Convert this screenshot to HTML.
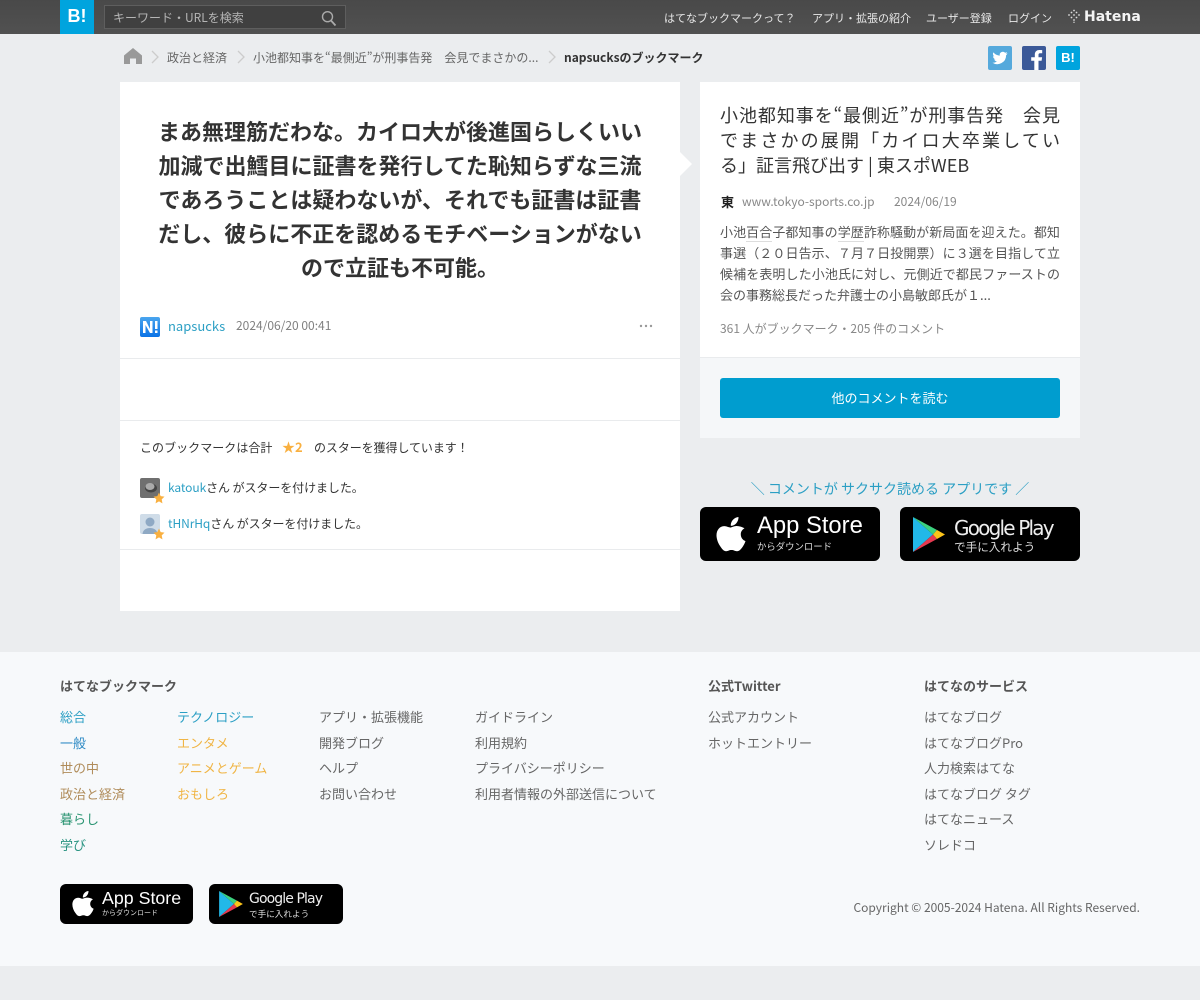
<!DOCTYPE html>
<html lang="ja"><head><meta charset="utf-8"><title>napsucksのブックマーク</title>
<style>
html,body{margin:0;padding:0}
body{width:1200px;height:1000px;overflow:hidden;position:relative;background:#ebedef;font-family:"Noto Sans CJK JP","Liberation Sans",sans-serif;color:#333}
.a{position:absolute;white-space:nowrap}
.t{position:absolute;white-space:nowrap;line-height:20px;font-size:13px}
.box{position:absolute;background:#fff}
.hr{position:absolute;height:1px;background:#e9ebed}
.badge{position:absolute;background:#000;border-radius:6px;overflow:hidden}
.j{display:block;text-align:justify;text-align-last:justify;white-space:normal}
</style></head><body>

<!-- header -->
<div class="a" style="left:0;top:0;width:1200px;height:34px;background:linear-gradient(#494949,#515151)"></div>
<div class="a" style="left:60px;top:0;width:34px;height:34px;background:#00a4de"></div>
<div class="a" style="left:60px;top:0;width:34px;height:34px;text-align:center;color:#fff;font:bold 18px/33px 'Liberation Sans',sans-serif">B!</div>
<div class="a" style="left:104px;top:5px;width:240px;height:22px;background:#404040;border:1px solid #5e5e5e"></div>
<div class="t" style="left:113px;top:8px;font-size:12px;color:#b5b5b5">キーワード・URLを検索</div>
<svg class="a" style="left:320px;top:10px" width="18" height="17" viewBox="0 0 18 17"><circle cx="7.500" cy="6.700" r="5" fill="none" stroke="#aaa" stroke-width="1.400"/><path d="M11 10.500L15.500 15.500" stroke="#aaa" stroke-width="1.800"/></svg>
<div class="t" style="left:664px;top:8px;font-size:11px;color:#e8e8e8">はてなブックマークって？</div>
<div class="t" style="left:812px;top:8px;font-size:11px;color:#e8e8e8">アプリ・拡張の紹介</div>
<div class="t" style="left:926px;top:8px;font-size:11px;color:#e8e8e8">ユーザー登録</div>
<div class="t" style="left:1008px;top:8px;font-size:11px;color:#e8e8e8">ログイン</div>
<svg class="a" style="left:1067px;top:9px" width="14" height="14" viewBox="0 0 14 14" fill="#ddd"><circle cx="7" cy="1.500" r=".9"/><circle cx="4.500" cy="3.500" r=".9"/><circle cx="9.500" cy="3.500" r=".9"/><circle cx="2" cy="6" r=".9"/><circle cx="7" cy="6" r=".9"/><circle cx="12" cy="6" r=".9"/><circle cx="4.500" cy="8.500" r=".9"/><circle cx="9.500" cy="8.500" r=".9"/><circle cx="7" cy="11" r=".9"/><circle cx="7" cy="13.300" r=".7"/></svg>
<div class="a" style="left:1084px;top:7px;font:bold 14px/20px 'DejaVu Sans',sans-serif;color:#f4f4f4">Hatena</div>

<!-- breadcrumb -->
<svg class="a" style="left:124px;top:48px" width="18" height="16" viewBox="0 0 18 16"><path d="M9 0L18 7.500V16H12V10.500H6V16H0V7.500Z" fill="#999"/></svg>
<svg class="a" style="left:150px;top:50px" width="10" height="14" viewBox="0 0 10 14"><path d="M2 1L8 7L2 13" fill="none" stroke="#ccc" stroke-width="1.300"/></svg>
<div class="t" style="left:167px;top:48px;font-size:12px;color:#666">政治と経済</div>
<svg class="a" style="left:236px;top:50px" width="10" height="14" viewBox="0 0 10 14"><path d="M2 1L8 7L2 13" fill="none" stroke="#ccc" stroke-width="1.300"/></svg>
<div class="t" style="left:253px;top:48px;font-size:12px;color:#666">小池都知事を“最側近”が刑事告発　会見でまさかの...</div>
<svg class="a" style="left:547px;top:50px" width="10" height="14" viewBox="0 0 10 14"><path d="M2 1L8 7L2 13" fill="none" stroke="#ccc" stroke-width="1.300"/></svg>
<div class="t" style="left:564px;top:48px;font-size:12px;font-weight:bold;color:#333">napsucksのブックマーク</div>

<svg class="a" style="left:988px;top:46px" width="24" height="24" viewBox="0 0 24 24"><rect width="24" height="24" rx="2" fill="#55a9dc"/><path d="M19.500 7.200c-.6.300-1.200.4-1.800.5.700-.4 1.100-1 1.400-1.700-.6.400-1.300.6-2 .8a3.100 3.100 0 0 0-5.300 2.800C9.200 9.500 6.900 8.300 5.400 6.400c-.8 1.400-.4 3.200 1 4.100-.5 0-1-.2-1.400-.4 0 1.500 1.100 2.800 2.500 3.100-.5.100-.9.200-1.400.1.400 1.200 1.500 2.100 2.900 2.100A6.300 6.300 0 0 1 4.500 16.700 8.800 8.800 0 0 0 18.100 9.200c.6-.5 1-1.200 1.400-2Z" fill="#fff"/></svg>
<svg class="a" style="left:1022px;top:46px" width="24" height="24" viewBox="0 0 24 24"><rect width="24" height="24" rx="2" fill="#3b5998"/><path d="M16.500 24v-9.200h3.100l.5-3.600h-3.600V9c0-1 .3-1.700 1.800-1.700h1.900V4.100c-.3 0-1.500-.1-2.800-.1-2.800 0-4.600 1.700-4.600 4.700v2.500H9.200v3.600h3.100V24Z" fill="#fff"/></svg>
<div class="a" style="left:1056px;top:46px;width:24px;height:24px;border-radius:2px;background:#00a4de;color:#fff;text-align:center;font:bold 13px/24px 'Liberation Sans',sans-serif">B!</div>

<!-- left card -->
<div class="box" style="left:120px;top:82px;width:560px;height:529px"></div>
<div class="a" style="left:120px;top:114px;width:560px;text-align:center;font-size:22px;font-weight:bold;line-height:34px;color:#333">まあ無理筋だわな。カイロ大が後進国らしくいい<br>加減で出鱈目に証書を発行してた恥知らずな三流<br>であろうことは疑わないが、それでも証書は証書<br>だし、彼らに不正を認めるモチベーションがない<br>ので立証も不可能。</div>
<svg class="a" style="left:140px;top:317px" width="20" height="20" viewBox="0 0 20 20"><defs><linearGradient id="g1" x1="0" y1="0" x2="0" y2="1"><stop offset="0" stop-color="#4aa5ee"/><stop offset="1" stop-color="#0a72e6"/></linearGradient></defs><rect width="20" height="20" rx="2" fill="url(#g1)"/><path d="M3 4h3l4 8V4h2.500v12H10L5.500 8v8H3ZM15 4h2.500v8H15ZM15 13.500h2.500V16H15Z" fill="#fff"/></svg>
<div class="t" style="left:168px;top:316px;font-size:13px;color:#2b9fc4">napsucks</div>
<div class="t" style="left:236px;top:316px;font-size:12px;color:#808080">2024/06/20 00:41</div>
<svg class="a" style="left:639px;top:323px" width="14" height="6" viewBox="0 0 14 6" fill="#999"><circle cx="2" cy="3" r="1.200"/><circle cx="7" cy="3" r="1.200"/><circle cx="12" cy="3" r="1.200"/></svg>
<div class="hr" style="left:120px;top:358px;width:560px"></div>
<div class="hr" style="left:120px;top:420px;width:560px"></div>
<div class="t" style="left:140px;top:438px;font-size:12px;color:#333;letter-spacing:.04px">このブックマークは合計</div>
<div class="t" style="left:282px;top:437px;font-size:13px;font-weight:bold;color:#f9b040">★2</div>
<div class="t" style="left:314px;top:438px;font-size:12px;color:#333;letter-spacing:-.08px">のスターを獲得しています！</div>

<svg class="a" style="left:140px;top:478px" width="20" height="20" viewBox="0 0 20 20"><rect width="20" height="20" rx="2" fill="#6f6f6f"/><ellipse cx="11" cy="10" rx="6" ry="4.500" fill="#444"/><ellipse cx="10" cy="8.500" rx="4.500" ry="3.500" fill="#aaa"/></svg>
<svg class="a" style="left:153px;top:492px" width="12" height="12" viewBox="0 0 24 24"><path d="M12 1l3.400 7.300 7.600 1-5.600 5.400 1.500 8L12 18.700 5.100 22.700l1.500-8L1 9.300l7.600-1Z" fill="#f9b040"/></svg>
<div class="t" style="left:168px;top:478px;font-size:12px;color:#333;letter-spacing:-.08px"><span style="color:#2b9fc4">katouk</span>さん がスターを付けました。</div>
<svg class="a" style="left:140px;top:514px" width="20" height="20" viewBox="0 0 20 20"><rect width="20" height="20" rx="2" fill="#cfdce8"/><circle cx="10" cy="8" r="4.500" fill="#8fa9c4"/><path d="M2.500 20c.3-4 3.500-6 7.500-6s7.200 2 7.500 6Z" fill="#8fa9c4"/></svg>
<svg class="a" style="left:153px;top:528px" width="12" height="12" viewBox="0 0 24 24"><path d="M12 1l3.400 7.300 7.600 1-5.600 5.400 1.500 8L12 18.700 5.100 22.700l1.500-8L1 9.300l7.600-1Z" fill="#f9b040"/></svg>
<div class="t" style="left:168px;top:514px;font-size:12px;color:#333;letter-spacing:-.08px"><span style="color:#2b9fc4">tHNrHq</span>さん がスターを付けました。</div>
<div class="hr" style="left:120px;top:549px;width:560px"></div>

<!-- right card -->
<div class="box" style="left:700px;top:82px;width:380px;height:275px"></div>
<div class="a" style="left:680px;top:152px;width:0;height:0;border-left:12px solid #fff;border-top:12px solid transparent;border-bottom:12px solid transparent"></div>
<div class="a" style="left:700px;top:357px;width:380px;height:81px;background:#f5f7f9;border-top:1px solid #e9ebed;box-sizing:border-box"></div>
<div class="a" style="left:720px;top:103px;width:340px;font-size:18px;line-height:25px;color:#333;white-space:normal">
<span class="j">小池都知事を“最側近”が刑事告発　会見</span>
<span class="j">でまさかの展開「カイロ大卒業してい</span>
<span style="display:block;white-space:nowrap">る」証言飛び出す | 東スポWEB</span>
</div>
<div class="t" style="left:721px;top:192px;font-size:13px;font-weight:bold;color:#222">東</div>
<div class="t" style="left:742px;top:192px;font-size:12px;color:#888">www.tokyo-sports.co.jp</div>
<div class="t" style="left:894px;top:192px;font-size:12px;color:#888">2024/06/19</div>
<div class="a" style="left:720px;top:221px;width:340px;font-size:13px;line-height:21px;color:#555;text-align:justify;white-space:normal">小池<span style="border-bottom:1px solid #ddd">百合</span>子都知事の<span style="border-bottom:1px solid #ddd">学歴</span>詐称騒動が新局面を迎えた。都知事選（２０日告示、７月７日投開票）に３選を目指して立候補を表明した小池氏に対し、元側近で都民ファーストの会の事務総長だった弁護士の小島敏郎氏が１...</div>
<div class="t" style="left:720px;top:319px;font-size:12px;color:#888">361 人がブックマーク・205 件のコメント</div>
<div class="a" style="left:720px;top:378px;width:340px;height:40px;background:#009dcf;border-radius:3px;color:#fff;text-align:center;font-size:13px;line-height:40px">他のコメントを読む</div>

<div class="a" style="left:700px;top:479px;width:380px;text-align:center;font-size:14px;line-height:20px;color:#2b9fc4">＼ コメントが サクサク読める アプリです ／</div>

<!-- big badges -->
<div class="badge" style="left:700px;top:507px;width:180px;height:54px"></div>
<svg class="a" style="left:716px;top:516px" width="30" height="36" viewBox="0 0 30 36"><path d="M22.500 1c.1 2.600-.9 4.700-2.200 6.200-1.500 1.700-3.600 2.800-5.500 2.600-.2-2.300.8-4.600 2.200-6.100C18.500 2.100 20.800 1 22.500 1ZM28.500 12.300c-2.500 1.500-3.800 3.700-3.700 6.300.1 3 1.900 5.400 4.700 6.500-.8 2.400-1.900 4.500-3.500 6.600-1.700 2.300-3.200 3.500-5 3.500-2 0-3.100-1.200-5.500-1.200s-3.600 1.200-5.400 1.200c-2 0-3.600-1.600-5.300-4.100C2.100 27.500.5 23 .5 19.300c0-5.600 3.500-9.200 8-9.200 2.400 0 4.200 1.400 5.800 1.400 1.500 0 3.700-1.600 6.400-1.500 3 .1 5.900 1.100 7.800 2.300Z" fill="#fff"/></svg>
<div class="a" style="left:757px;top:510px;font:23.800px/32px 'Liberation Sans',sans-serif;color:#fff">App Store</div>
<div class="a" style="left:757px;top:539px;font-size:9.400px;line-height:14px;color:#ddd">からダウンロード</div>

<div class="badge" style="left:900px;top:507px;width:180px;height:54px"></div>
<svg class="a" style="left:913px;top:517px" width="32" height="35" viewBox="0 0 32 35"><path d="M0 0L20 17.500L0 35Z" fill="#22b8e8"/><path d="M0 0L24 13L20 17.500Z" fill="#3bd17f"/><path d="M0 35L24 22L20 17.500Z" fill="#e63950"/><path d="M24 13L32 17.500L24 22L20 17.500Z" fill="#fcc419"/></svg>
<div class="a" style="left:954px;top:514px;font:20px/28px 'DejaVu Sans',sans-serif;color:#eee;letter-spacing:-1.800px">Google Play</div>
<div class="a" style="left:954px;top:539px;font-size:11.600px;line-height:16px;color:#ddd">で手に入れよう</div>

<!-- footer -->
<div class="a" style="left:0;top:652px;width:1200px;height:314px;background:#f7f9fb"></div>
<div class="t" style="left:60px;top:676px;font-weight:bold;color:#555">はてなブックマーク</div>
<div class="t" style="left:708px;top:676px;font-weight:bold;color:#555">公式Twitter</div>
<div class="t" style="left:924px;top:676px;font-weight:bold;color:#555">はてなのサービス</div>

<div class="t" style="left:60px;top:707px;color:#2b9fc4">総合</div>
<div class="t" style="left:60px;top:733px;color:#2b89c4">一般</div>
<div class="t" style="left:60px;top:758px;color:#b08c5a">世の中</div>
<div class="t" style="left:60px;top:784px;color:#b08c5a">政治と経済</div>
<div class="t" style="left:60px;top:809px;color:#2a9472">暮らし</div>
<div class="t" style="left:60px;top:835px;color:#2a9482">学び</div>

<div class="t" style="left:177px;top:707px;color:#2b9fc4">テクノロジー</div>
<div class="t" style="left:177px;top:733px;color:#f0b545">エンタメ</div>
<div class="t" style="left:177px;top:758px;color:#f0b545">アニメとゲーム</div>
<div class="t" style="left:177px;top:784px;color:#f0b545">おもしろ</div>

<div class="t" style="left:319px;top:707px;color:#666">アプリ・拡張機能</div>
<div class="t" style="left:319px;top:733px;color:#666">開発ブログ</div>
<div class="t" style="left:319px;top:758px;color:#666">ヘルプ</div>
<div class="t" style="left:319px;top:784px;color:#666">お問い合わせ</div>

<div class="t" style="left:475px;top:707px;color:#666">ガイドライン</div>
<div class="t" style="left:475px;top:733px;color:#666">利用規約</div>
<div class="t" style="left:475px;top:758px;color:#666">プライバシーポリシー</div>
<div class="t" style="left:475px;top:784px;color:#666">利用者情報の外部送信について</div>

<div class="t" style="left:708px;top:707px;color:#666">公式アカウント</div>
<div class="t" style="left:708px;top:733px;color:#666">ホットエントリー</div>

<div class="t" style="left:924px;top:707px;color:#666">はてなブログ</div>
<div class="t" style="left:924px;top:733px;color:#666">はてなブログPro</div>
<div class="t" style="left:924px;top:758px;color:#666">人力検索はてな</div>
<div class="t" style="left:924px;top:784px;color:#666">はてなブログ タグ</div>
<div class="t" style="left:924px;top:809px;color:#666">はてなニュース</div>
<div class="t" style="left:924px;top:835px;color:#666">ソレドコ</div>

<!-- small badges -->
<div class="badge" style="left:60px;top:884px;width:133px;height:40px"></div>
<svg class="a" style="left:72px;top:890px" width="22" height="27" viewBox="0 0 30 36"><path d="M22.500 1c.1 2.600-.9 4.700-2.200 6.200-1.500 1.700-3.600 2.800-5.500 2.600-.2-2.300.8-4.600 2.200-6.100C18.500 2.100 20.800 1 22.500 1ZM28.500 12.300c-2.500 1.500-3.800 3.700-3.700 6.300.1 3 1.900 5.400 4.700 6.500-.8 2.400-1.900 4.500-3.500 6.600-1.700 2.300-3.200 3.500-5 3.500-2 0-3.100-1.200-5.500-1.200s-3.600 1.200-5.400 1.200c-2 0-3.600-1.600-5.300-4.100C2.100 27.500.5 23 .5 19.300c0-5.600 3.500-9.200 8-9.200 2.400 0 4.200 1.400 5.800 1.400 1.500 0 3.700-1.600 6.400-1.500 3 .1 5.900 1.100 7.800 2.300Z" fill="#fff"/></svg>
<div class="a" style="left:102px;top:886px;font:17.800px/24px 'Liberation Sans',sans-serif;color:#fff">App Store</div>
<div class="a" style="left:102px;top:907px;font-size:7px;line-height:12px;color:#ddd">からダウンロード</div>

<div class="badge" style="left:209px;top:884px;width:134px;height:40px"></div>
<svg class="a" style="left:219px;top:891px" width="24" height="26" viewBox="0 0 32 35"><path d="M0 0L20 17.500L0 35Z" fill="#22b8e8"/><path d="M0 0L24 13L20 17.500Z" fill="#3bd17f"/><path d="M0 35L24 22L20 17.500Z" fill="#e63950"/><path d="M24 13L32 17.500L24 22L20 17.500Z" fill="#fcc419"/></svg>
<div class="a" style="left:249px;top:889px;font:14px/21px 'DejaVu Sans',sans-serif;color:#eee;letter-spacing:-.9px">Google Play</div>
<div class="a" style="left:249px;top:908px;font-size:8.600px;line-height:12px;color:#ddd">で手に入れよう</div>

<div class="t" style="right:60px;top:898px;font-size:12px;color:#666">Copyright © 2005-2024 Hatena. All Rights Reserved.</div>
</body></html>
